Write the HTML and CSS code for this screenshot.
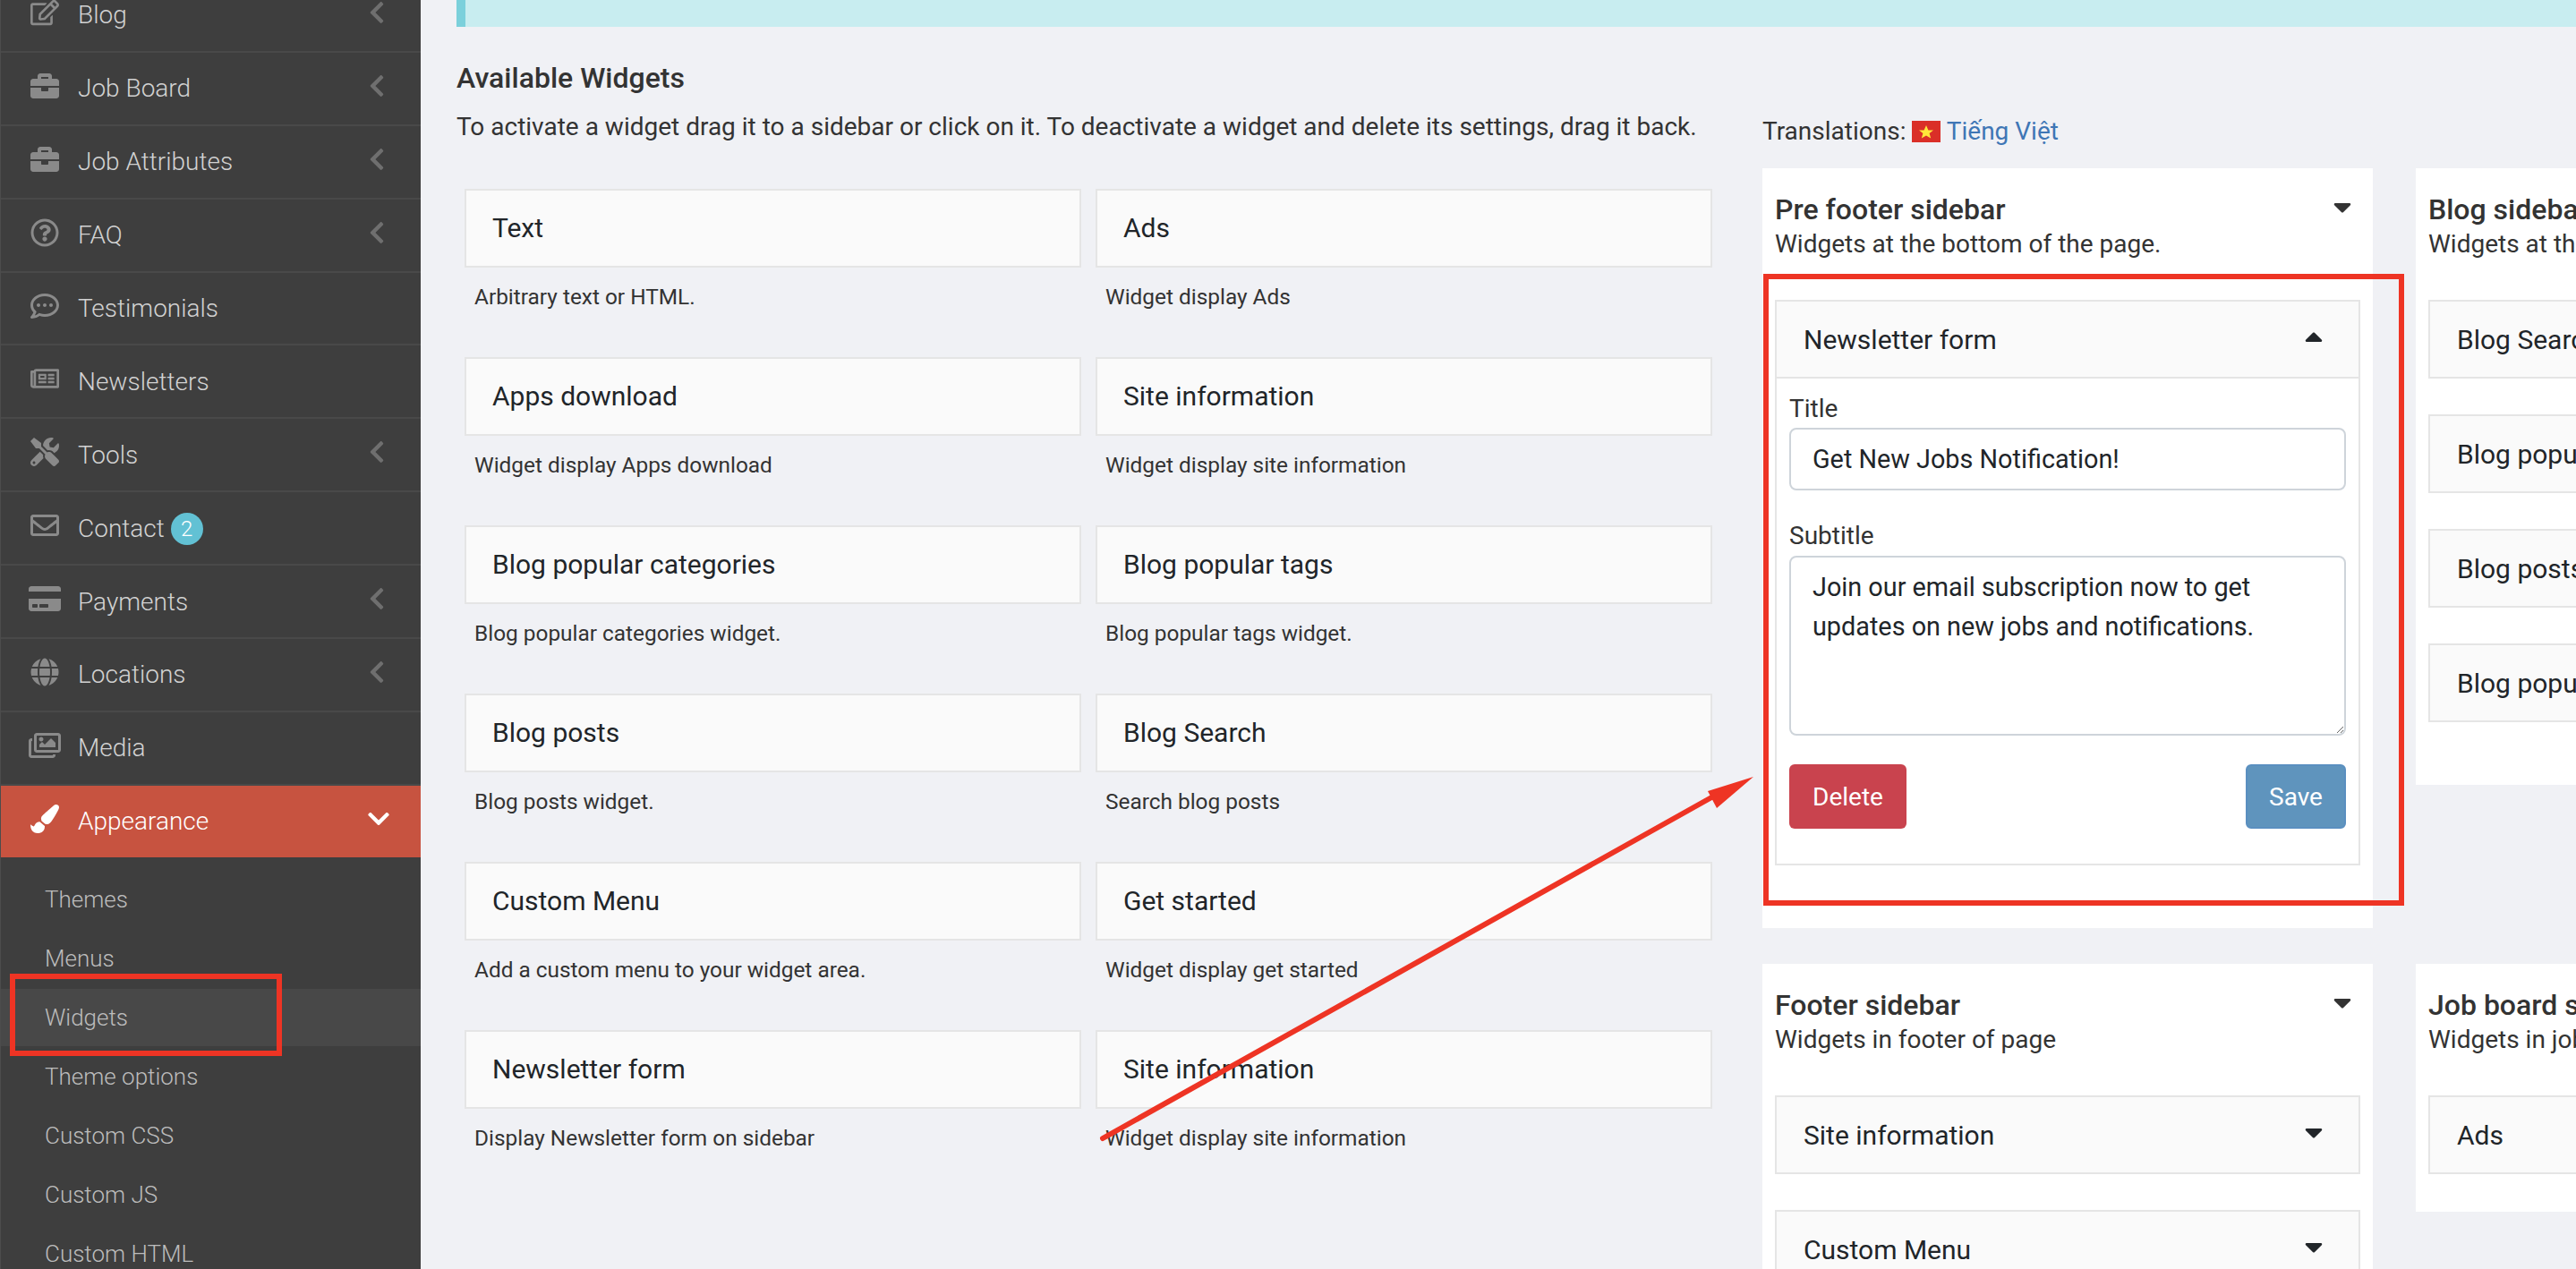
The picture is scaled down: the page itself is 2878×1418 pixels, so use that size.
FILE: index.html
```html
<!DOCTYPE html>
<html>
<head>
    <meta charset="utf-8">
    <title>Widgets</title>
    <link rel="stylesheet" href="styles.css">
</head>
<body>
    <svg class="icon-defs" width="0" height="0">
        <symbol id="chevron-left" viewBox="0 0 320 512"><path d="M34.52 239.03L228.87 44.69c9.37-9.37 24.57-9.37 33.94 0l22.67 22.67c9.36 9.36 9.37 24.52.04 33.9L131.49 256l154.02 154.75c9.34 9.38 9.32 24.54-.04 33.9l-22.67 22.67c-9.37 9.37-24.57 9.37-33.94 0L34.52 272.97c-9.37-9.37-9.37-24.57 0-33.94z"/></symbol>
        <symbol id="chevron-down" viewBox="0 0 448 512"><path d="M207.029 381.476L12.686 187.132c-9.373-9.373-9.373-24.569 0-33.941l22.667-22.667c9.357-9.357 24.522-9.375 33.901-.04L224 284.505l154.745-154.021c9.379-9.335 24.544-9.317 33.901.04l22.667 22.667c9.373 9.373 9.373 24.569 0 33.941L240.971 381.476c-9.373 9.372-24.569 9.372-33.942 0z"/></symbol>
        <symbol id="caret-down" viewBox="0 160 320 224"><path d="M31.3 192h257.3c17.8 0 26.7 21.5 14.1 34.1L174.1 354.8c-7.8 7.8-20.5 7.8-28.3 0L17.2 226.1C4.6 213.5 13.5 192 31.3 192z"/></symbol>
        <symbol id="caret-up" viewBox="0 160 320 224"><path d="M288.662 352H31.338c-17.818 0-26.741-21.543-14.142-34.142l128.662-128.662c7.81-7.81 20.474-7.81 28.284 0l128.662 128.662c12.6 12.599 3.676 34.142-14.142 34.142z"/></symbol>
        <symbol id="briefcase" viewBox="0 0 512 512"><path d="M320 336c0 8.84-7.16 16-16 16h-96c-8.84 0-16-7.16-16-16v-48H0v144c0 25.6 22.4 48 48 48h416c25.6 0 48-22.4 48-48V288H320v48zm144-208h-80V80c0-25.6-22.4-48-48-48H176c-25.6 0-48 22.4-48 48v48H48c-25.6 0-48 22.4-48 48v80h512v-80c0-25.6-22.4-48-48-48zm-144 0H192V96h128v32z"/></symbol>
    </svg>

    <div class="page">
        <nav class="sidebar">
            <ul class="menu">
                <li class="menu-item">
                    <svg class="menu-icon" viewBox="0 0 576 512"><path d="M402.3 344.9l32-32c5-5 13.7-1.5 13.7 5.7V464c0 26.5-21.5 48-48 48H48c-26.5 0-48-21.5-48-48V112c0-26.5 21.5-48 48-48h273.5c7.1 0 10.7 8.6 5.7 13.7l-32 32c-1.5 1.5-3.5 2.3-5.7 2.3H48v352h352V350.5c0-2.1.8-4.1 2.3-5.6zm156.6-201.8L296.3 405.7l-90.4 10c-26.2 2.9-48.5-19.2-45.6-45.6l10-90.4L432.9 17.1c22.9-22.9 59.9-22.9 82.7 0l43.2 43.2c22.9 22.9 22.9 60 .1 82.8zM460.1 174L402 115.9 216.2 301.8l-7.3 65.3 65.3-7.3L460.1 174zm64.8-79.7l-43.2-43.2c-4.1-4.1-10.8-4.1-14.8 0L436 82l58.1 58.1 30.9-30.9c4-4.2 4-10.8-.1-14.9z"/></svg>
                    <span class="menu-label">Blog</span>
                    <svg class="menu-arrow"><use href="#chevron-left"/></svg>
                </li>
                <li class="menu-item">
                    <svg class="menu-icon"><use href="#briefcase"/></svg>
                    <span class="menu-label">Job Board</span>
                    <svg class="menu-arrow"><use href="#chevron-left"/></svg>
                </li>
                <li class="menu-item">
                    <svg class="menu-icon"><use href="#briefcase"/></svg>
                    <span class="menu-label">Job Attributes</span>
                    <svg class="menu-arrow"><use href="#chevron-left"/></svg>
                </li>
                <li class="menu-item">
                    <svg class="menu-icon" viewBox="0 0 512 512"><path d="M256 8C119.043 8 8 119.083 8 256c0 136.997 111.043 248 248 248s248-111.003 248-248C504 119.083 392.957 8 256 8zm0 448c-110.532 0-200-89.431-200-200 0-110.495 89.472-200 200-200 110.491 0 200 89.471 200 200 0 110.53-89.431 200-200 200zm107.244-255.2c0 67.052-72.421 68.084-72.421 92.863V300c0 6.627-5.373 12-12 12h-45.647c-6.627 0-12-5.373-12-12v-8.659c0-35.745 27.1-50.034 47.579-61.516 17.561-9.845 28.324-16.541 28.324-29.579 0-17.246-21.999-28.693-39.784-28.693-23.189 0-33.894 10.977-48.942 29.969-4.057 5.12-11.46 6.071-16.666 2.124l-27.824-21.098c-5.107-3.872-6.251-11.066-2.644-16.363C184.846 131.491 214.94 112 261.794 112c49.071 0 101.45 38.304 101.45 88.8zM298 368c0 23.159-18.841 42-42 42s-42-18.841-42-42 18.841-42 42-42 42 18.841 42 42z"/></svg>
                    <span class="menu-label">FAQ</span>
                    <svg class="menu-arrow"><use href="#chevron-left"/></svg>
                </li>
                <li class="menu-item">
                    <svg class="menu-icon" viewBox="0 0 512 512"><path d="M144 208c-17.7 0-32 14.3-32 32s14.3 32 32 32 32-14.3 32-32-14.3-32-32-32zm112 0c-17.7 0-32 14.3-32 32s14.3 32 32 32 32-14.3 32-32-14.3-32-32-32zm112 0c-17.7 0-32 14.3-32 32s14.3 32 32 32 32-14.3 32-32-14.3-32-32-32zM256 32C114.6 32 0 125.1 0 240c0 47.6 19.9 91.2 52.9 126.3C38 405.7 7 439.1 6.5 439.5c-6.6 7-8.4 17.2-4.6 26S14.4 480 24 480c61.5 0 110-25.7 139.1-46.3C192 442.8 223.2 448 256 448c141.4 0 256-93.1 256-208S397.4 32 256 32zm0 368c-26.7 0-53.1-4.1-78.4-12.1l-22.7-7.2-19.5 13.8c-14.3 10.1-33.9 21.4-57.5 29 7.3-12.1 14.4-25.7 19.9-40.2l10.6-28.1-20.6-21.8C69.7 314.1 48 282.2 48 240c0-88.2 93.3-160 208-160s208 71.8 208 160-93.3 160-208 160z"/></svg>
                    <span class="menu-label">Testimonials</span>
                </li>
                <li class="menu-item">
                    <svg class="menu-icon" viewBox="0 0 576 512"><path d="M552 64H112c-20.858 0-38.643 13.377-45.248 32H24c-13.255 0-24 10.745-24 24v272c0 30.928 25.072 56 56 56h496c13.255 0 24-10.745 24-24V88c0-13.255-10.745-24-24-24zM48 392V144h16v248c0 4.411-3.589 8-8 8s-8-3.589-8-8zm480 8H111.422c.374-2.614.578-5.283.578-8V112h416v288zM172 280h136c6.627 0 12-5.373 12-12v-96c0-6.627-5.373-12-12-12H172c-6.627 0-12 5.373-12 12v96c0 6.627 5.373 12 12 12zm28-80h80v40h-80v-40zm-40 140v-24c0-6.627 5.373-12 12-12h136c6.627 0 12 5.373 12 12v24c0 6.627-5.373 12-12 12H172c-6.627 0-12-5.373-12-12zm192 0v-24c0-6.627 5.373-12 12-12h104c6.627 0 12 5.373 12 12v24c0 6.627-5.373 12-12 12H364c-6.627 0-12-5.373-12-12zm0-144v-24c0-6.627 5.373-12 12-12h104c6.627 0 12 5.373 12 12v24c0 6.627-5.373 12-12 12H364c-6.627 0-12-5.373-12-12zm0 72v-24c0-6.627 5.373-12 12-12h104c6.627 0 12 5.373 12 12v24c0 6.627-5.373 12-12 12H364c-6.627 0-12-5.373-12-12z"/></svg>
                    <span class="menu-label">Newsletters</span>
                </li>
                <li class="menu-item">
                    <svg class="menu-icon" viewBox="0 0 512 512"><path d="M501.1 395.7L384 278.6c-23.1-23.1-57.6-27.6-85.4-13.9L192 158.1V96L64 0 0 64l96 128h62.1l106.6 106.6c-13.6 27.8-9.2 62.3 13.9 85.4l117.1 117.1c14.6 14.6 38.2 14.6 52.7 0l52.7-52.7c14.5-14.6 14.5-38.2 0-52.7zM331.7 225c28.3 0 54.9 11 74.9 31l19.4 19.4c15.8-6.9 30.8-16.5 43.8-29.5 37.1-37.1 49.7-89.3 37.9-136.7-2.2-9-13.5-12.1-20.1-5.5l-74.4 74.4-67.9-11.3L334 98.9l74.4-74.4c6.6-6.6 3.4-17.9-5.7-20.2-47.4-11.7-99.6.9-136.6 37.9-28.5 28.5-41.9 66.1-41.2 103.6l82.1 82.1c8.1-1.9 16.5-2.9 24.7-2.9zm-103.9 82l-56.7-56.7L18.7 402.8c-25 25-25 65.5 0 90.5s65.5 25 90.5 0l123.6-123.6c-7.6-19.9-9.9-41.6-5-62.7zM64 472c-13.2 0-24-10.8-24-24 0-13.3 10.7-24 24-24s24 10.7 24 24c0 13.2-10.7 24-24 24z"/></svg>
                    <span class="menu-label">Tools</span>
                    <svg class="menu-arrow"><use href="#chevron-left"/></svg>
                </li>
                <li class="menu-item">
                    <svg class="menu-icon" viewBox="0 0 512 512"><path d="M464 64H48C21.49 64 0 85.49 0 112v288c0 26.51 21.49 48 48 48h416c26.51 0 48-21.49 48-48V112c0-26.51-21.49-48-48-48zm0 48v40.805c-22.422 18.259-58.168 46.651-134.587 106.49-16.841 13.247-50.201 45.072-73.413 44.701-23.208.375-56.579-31.459-73.413-44.701C106.18 199.465 70.425 171.067 48 152.805V112h416zM48 400V214.398c22.914 18.251 55.409 43.862 104.938 82.646 21.857 17.205 60.134 55.186 103.062 54.955 42.717.231 80.509-37.199 103.053-54.947 49.528-38.783 82.032-64.401 104.947-82.653V400H48z"/></svg>
                    <span class="menu-label">Contact</span>
                    <span class="badge">2</span>
                </li>
                <li class="menu-item">
                    <svg class="menu-icon menu-icon-wide" viewBox="0 0 576 512"><path d="M0 432c0 26.5 21.5 48 48 48h480c26.5 0 48-21.5 48-48V256H0v176zm192-68c0-6.6 5.4-12 12-12h136c6.6 0 12 5.4 12 12v40c0 6.6-5.4 12-12 12H204c-6.6 0-12-5.4-12-12v-40zm-128 0c0-6.6 5.4-12 12-12h72c6.6 0 12 5.4 12 12v40c0 6.6-5.4 12-12 12H76c-6.6 0-12-5.4-12-12v-40zM576 80v48H0V80c0-26.5 21.5-48 48-48h480c26.5 0 48 21.5 48 48z"/></svg>
                    <span class="menu-label">Payments</span>
                    <svg class="menu-arrow"><use href="#chevron-left"/></svg>
                </li>
                <li class="menu-item">
                    <svg class="menu-icon" viewBox="0 0 496 512"><path d="M336.5 160C322 70.7 287.8 8 248 8s-74 62.7-88.5 152h177zM152 256c0 22.2 1.2 43.5 3.3 64h185.3c2.1-20.5 3.3-41.8 3.3-64s-1.2-43.5-3.3-64H155.3c-2.1 20.5-3.3 41.8-3.3 64zm324.7-96c-28.6-67.9-86.5-120.4-158-141.6 24.4 33.8 41.2 84.7 50 141.6h108zM177.2 18.4C105.8 39.6 47.8 92.1 19.3 160h108c8.7-56.9 25.5-107.8 49.9-141.6zM487.4 192H372.7c2.1 21 3.3 42.5 3.3 64s-1.2 43-3.3 64h114.6c5.5-20.5 8.6-41.8 8.6-64s-3.1-43.5-8.5-64zM120 256c0-21.5 1.2-43 3.3-64H8.6C3.2 212.5 0 233.8 0 256s3.2 43.5 8.6 64h114.6c-2-21-3.2-42.5-3.2-64zm39.5 96c14.5 89.3 48.7 152 88.5 152s74-62.7 88.5-152h-177zm159.3 141.6c71.4-21.2 129.4-73.7 158-141.6h-108c-8.8 56.9-25.6 107.8-50 141.6zM19.3 352c28.6 67.9 86.5 120.4 158 141.6-24.4-33.8-41.2-84.7-50-141.6h-108z"/></svg>
                    <span class="menu-label">Locations</span>
                    <svg class="menu-arrow"><use href="#chevron-left"/></svg>
                </li>
                <li class="menu-item">
                    <svg class="menu-icon menu-icon-wide" viewBox="0 0 576 512"><path d="M480 416v16c0 26.51-21.49 48-48 48H48c-26.51 0-48-21.49-48-48V176c0-26.51 21.49-48 48-48h16v48H54a6 6 0 0 0-6 6v244a6 6 0 0 0 6 6h372a6 6 0 0 0 6-6v-10h48zm42-336H150a6 6 0 0 0-6 6v244a6 6 0 0 0 6 6h372a6 6 0 0 0 6-6V86a6 6 0 0 0-6-6zm6-48c26.51 0 48 21.49 48 48v256c0 26.51-21.49 48-48 48H144c-26.51 0-48-21.49-48-48V80c0-26.51 21.49-48 48-48h384zM264 144c0 22.091-17.909 40-40 40s-40-17.909-40-40 17.909-40 40-40 40 17.909 40 40zm-72 96l39.515-39.515c4.686-4.686 12.284-4.686 16.971 0L288 240l103.515-103.515c4.686-4.686 12.284-4.686 16.971 0L480 208v80H192v-48z"/></svg>
                    <span class="menu-label">Media</span>
                </li>
                <li class="menu-item menu-item-active">
                    <svg class="menu-icon" viewBox="0 0 512 512"><path d="M167.02 309.34c-40.12 2.58-76.53 17.86-97.19 72.3-2.35 6.21-8 9.98-14.59 9.98-11.11 0-45.46-27.67-55.25-34.35C0 439.62 37.93 512 128 512c75.86 0 128-43.77 128-120.19 0-3.11-.65-6.08-.97-9.13l-88.01-73.34zM457.89 0c-15.16 0-29.37 6.71-40.21 16.45C213.27 199.05 192 203.34 192 257.09c0 13.7 3.25 26.76 8.73 38.7l63.82 53.18c7.21 1.8 14.64 3.03 22.39 3.03 62.11 0 98.11-45.47 211.16-256.46 7.38-14.35 13.9-29.85 13.9-45.99C512 20.64 486 0 457.89 0z"/></svg>
                    <span class="menu-label">Appearance</span>
                    <svg class="menu-arrow menu-arrow-open"><use href="#chevron-down"/></svg>
                </li>
            </ul>
            <ul class="submenu">
                <li>Themes</li>
                <li>Menus</li>
                <li class="submenu-active">Widgets</li>
                <li>Theme options</li>
                <li>Custom CSS</li>
                <li>Custom JS</li>
                <li>Custom HTML</li>
            </ul>
        </nav>

        <main class="content">
            <div class="notice"></div>
            <div class="columns">
                <section class="available">
                    <h2 class="available-title">Available Widgets</h2>
                    <p class="available-help">To activate a widget drag it to a sidebar or click on it. To deactivate a widget and delete its settings, drag it back.</p>
                    <div class="widget-grid">
                        <div class="widget-card"><div class="widget-name">Text</div><p class="widget-desc">Arbitrary text or HTML.</p></div>
                        <div class="widget-card"><div class="widget-name">Ads</div><p class="widget-desc">Widget display Ads</p></div>
                        <div class="widget-card"><div class="widget-name">Apps download</div><p class="widget-desc">Widget display Apps download</p></div>
                        <div class="widget-card"><div class="widget-name">Site information</div><p class="widget-desc">Widget display site information</p></div>
                        <div class="widget-card"><div class="widget-name">Blog popular categories</div><p class="widget-desc">Blog popular categories widget.</p></div>
                        <div class="widget-card"><div class="widget-name">Blog popular tags</div><p class="widget-desc">Blog popular tags widget.</p></div>
                        <div class="widget-card"><div class="widget-name">Blog posts</div><p class="widget-desc">Blog posts widget.</p></div>
                        <div class="widget-card"><div class="widget-name">Blog Search</div><p class="widget-desc">Search blog posts</p></div>
                        <div class="widget-card"><div class="widget-name">Custom Menu</div><p class="widget-desc">Add a custom menu to your widget area.</p></div>
                        <div class="widget-card"><div class="widget-name">Get started</div><p class="widget-desc">Widget display get started</p></div>
                        <div class="widget-card"><div class="widget-name">Newsletter form</div><p class="widget-desc">Display Newsletter form on sidebar</p></div>
                        <div class="widget-card"><div class="widget-name">Site information</div><p class="widget-desc">Widget display site information</p></div>
                    </div>
                </section>

                <section class="areas">
                    <p class="translations">Translations: <svg class="flag" viewBox="0 0 32 24"><rect width="32" height="24" fill="#da2f28"/><polygon points="16,5 18.4,10.4 24,10.4 19.6,14 21.2,19.6 16,16.4 10.8,19.6 12.4,14 8,10.4 13.6,10.4" fill="#ffe83a"/></svg> <a class="translation-link">Tiếng Việt</a></p>
                    <div class="area-grid">
                        <div class="area">
                            <div class="area-head">
                                <div class="area-title">Pre footer sidebar<svg class="caret area-caret"><use href="#caret-down"/></svg></div>
                                <div class="area-desc">Widgets at the bottom of the page.</div>
                            </div>
                            <div class="area-widget">
                                <div class="area-widget-head">Newsletter form<svg class="caret"><use href="#caret-up"/></svg></div>
                                <form class="widget-form">
                                    <label class="field-label" for="nl-title">Title</label>
                                    <input class="field field-input" id="nl-title" type="text" value="Get New Jobs Notification!">
                                    <label class="field-label field-label-second" for="nl-subtitle">Subtitle</label>
                                    <textarea class="field field-area" id="nl-subtitle">Join our email subscription now to get updates on new jobs and notifications.</textarea>
                                    <div class="form-actions">
                                        <button class="btn btn-delete" type="button">Delete</button>
                                        <button class="btn btn-save" type="button">Save</button>
                                    </div>
                                </form>
                            </div>
                        </div>
                        <div class="area">
                            <div class="area-head">
                                <div class="area-title">Blog sidebar<svg class="caret area-caret"><use href="#caret-down"/></svg></div>
                                <div class="area-desc">Widgets at the bottom of blog pages.</div>
                            </div>
                            <div class="area-widget"><div class="area-widget-head">Blog Search<svg class="caret"><use href="#caret-down"/></svg></div></div>
                            <div class="area-widget"><div class="area-widget-head">Blog popular categories<svg class="caret"><use href="#caret-down"/></svg></div></div>
                            <div class="area-widget"><div class="area-widget-head">Blog posts<svg class="caret"><use href="#caret-down"/></svg></div></div>
                            <div class="area-widget"><div class="area-widget-head">Blog popular tags<svg class="caret"><use href="#caret-down"/></svg></div></div>
                        </div>
                        <div class="area">
                            <div class="area-head">
                                <div class="area-title">Footer sidebar<svg class="caret area-caret"><use href="#caret-down"/></svg></div>
                                <div class="area-desc">Widgets in footer of page</div>
                            </div>
                            <div class="area-widget"><div class="area-widget-head">Site information<svg class="caret"><use href="#caret-down"/></svg></div></div>
                            <div class="area-widget"><div class="area-widget-head">Custom Menu<svg class="caret"><use href="#caret-down"/></svg></div></div>
                        </div>
                        <div class="area area-tight">
                            <div class="area-head">
                                <div class="area-title">Job board sidebar<svg class="caret area-caret"><use href="#caret-down"/></svg></div>
                                <div class="area-desc">Widgets in job board pages</div>
                            </div>
                            <div class="area-widget"><div class="area-widget-head">Ads<svg class="caret"><use href="#caret-down"/></svg></div></div>
                        </div>
                    </div>
                </section>
            </div>
        </main>
    </div>

    <!-- red markup drawn over the screenshot -->
    <svg class="markup" viewBox="0 0 2878 1418">
        <rect x="14" y="1091" width="298" height="86" fill="none" stroke="#ee3424" stroke-width="6"/>
        <rect x="1973" y="309" width="710" height="700" fill="none" stroke="#ee3424" stroke-width="6"/>
        <path d="M1232 1272L1914 890" stroke="#ee3424" stroke-width="6" stroke-linecap="round"/>
        <polygon points="1959,868 1908,884 1918,903" fill="#ee3424"/>
    </svg>
</body>
</html>
```

FILE: styles.css
```css
* {
    box-sizing: border-box;
}
html, body {
    margin: 0;
    height: 1418px;
    overflow: hidden;
}
body {
    position: relative;
    background-color: #f0f1f5;
    color: #212529;
    font-family: Roboto, "Liberation Sans", sans-serif;
    font-size: 28px;
}
ul {
    list-style: none;
    margin: 0;
    padding: 0;
}
p {
    margin: 0;
}
.icon-defs {
    position: absolute;
}
.page {
    display: flex;
    height: 1418px;
}

/* sidebar */
.sidebar {
    flex: 0 0 470px;
    height: 1418px;
    overflow: hidden;
    background-color: #3e3e3e;
    border-left: 1px solid #4c4c4c;
    font-weight: 300;
}
.menu {
    margin-top: -23px;
}
.menu-item {
    display: flex;
    align-items: center;
    height: 81.9px;
    padding-left: 33px;
    border-bottom: 2px solid #494949;
    color: #d2d2d2;
}
.menu-icon {
    flex: 0 0 32px;
    width: 32px;
    height: 32px;
    margin-top: -6px;
    fill: #8a8a8a;
}
.menu-icon-wide {
    flex: 0 0 36px;
    width: 36px;
    margin-left: -2px;
    margin-right: -2px;
}
.menu-label {
    margin-left: 21px;
}
.menu-arrow {
    width: 18px;
    height: 28px;
    margin-left: auto;
    margin-right: 40px;
    margin-top: -6px;
    fill: #6f6f6f;
}
.badge {
    display: flex;
    align-items: center;
    justify-content: center;
    width: 36px;
    height: 36px;
    margin-left: 7px;
    margin-top: 2px;
    border-radius: 50%;
    background-color: #62c1d4;
    color: #fff;
    font-size: 24px;
}
.menu-item-active {
    height: 80px;
    border-bottom: 0;
    background-color: #c75340;
    color: #fff;
}
.menu-item-active .menu-icon {
    fill: #fff;
}
.menu-arrow-open {
    width: 24px;
    margin-right: 35px;
    fill: #fff;
}
.submenu {
    padding-top: 15px;
}
.submenu li {
    height: 66px;
    padding: 16px 0 0 49px;
    color: #bcbcbc;
    font-size: 26px;
    line-height: 32px;
}
.submenu .submenu-active {
    height: 64px;
    margin-bottom: 2px;
    background-color: #484848;
}

/* main */
.content {
    flex: 1;
    min-width: 0;
    padding-left: 40px;
}
.notice {
    height: 30px;
    background-color: #c8edf0;
    border-left: 10px solid #7bd0db;
}
.columns {
    display: flex;
}
.available {
    flex: 0 0 1459px;
}
.available-title {
    margin: 38px 0 0;
    color: #333;
    font-size: 32px;
    font-weight: 500;
    line-height: 38px;
}
.available-help {
    margin-top: 19px;
    color: #333;
    line-height: 34px;
}
.widget-grid {
    display: grid;
    grid-template-columns: 689px 689px;
    column-gap: 16px;
    margin: 52px 0 0 9px;
}
.widget-card {
    height: 188px;
}
.widget-name {
    height: 88px;
    padding-left: 29px;
    background-color: #fafafa;
    border: 2px solid #e5e5e5;
    color: #212529;
    line-height: 84px;
    font-size: 30px;
}
.widget-desc {
    margin-top: 18px;
    padding-left: 11px;
    color: #333;
    font-size: 24.4px;
    line-height: 30px;
}

/* widget areas */
.areas {
    flex: none;
    width: 1500px;
}
.translations {
    margin-top: 100px;
    height: 34px;
    line-height: 34px;
    color: #333;
}
.flag {
    width: 32px;
    height: 24px;
    vertical-align: -3px;
}
.translation-link {
    color: #3f76b5;
}
.area-grid {
    display: grid;
    grid-template-columns: 682px 682px;
    column-gap: 48px;
    row-gap: 40px;
    margin-top: 24px;
    align-items: start;
}
.area {
    background-color: #fff;
    padding: 0 14px 30px;
}
.area-tight {
    padding-bottom: 2px;
}
.area-head {
    height: 147px;
    padding-top: 27px;
}
.area-title {
    display: flex;
    align-items: center;
    justify-content: space-between;
    padding-right: 10px;
    color: #333;
    font-size: 32px;
    font-weight: 500;
    line-height: 38px;
}
.area-desc {
    margin-top: 3px;
    color: #333;
    line-height: 34px;
}
.area-widget {
    margin-bottom: 40px;
    border: 2px solid #e5e5e5;
}
.area-widget-head {
    display: flex;
    align-items: center;
    justify-content: space-between;
    height: 84px;
    padding: 0 40px 0 30px;
    background-color: #fafafa;
    color: #212529;
    font-size: 30px;
}
.caret {
    width: 20px;
    height: 14px;
    margin-top: -4px;
    fill: #212529;
}
.area-caret {
    fill: #333;
}
.widget-form {
    height: 544px;
    padding: 0 14px;
    border-top: 2px solid #e5e5e5;
}
.field-label {
    display: block;
    padding-top: 18px;
    color: #333;
    line-height: 32px;
}
.field-label-second {
    padding-top: 35px;
}
.field {
    display: block;
    width: 622px;
    margin-top: 5px;
    padding: 0 24px;
    background-color: #fff;
    border: 2px solid #ced4da;
    border-radius: 8px;
    color: #212529;
    font-family: Roboto, "Liberation Sans", sans-serif;
    font-size: 28.8px;
}
.field-input {
    height: 70px;
}
.field-area {
    height: 201px;
    margin-top: 6px;
    padding-top: 11px;
    line-height: 44px;
    resize: vertical;
}
.form-actions {
    display: flex;
    justify-content: space-between;
    margin-top: 32px;
}
.btn {
    height: 72px;
    border: 0;
    border-radius: 6px;
    color: #fff;
    font-family: Roboto, "Liberation Sans", sans-serif;
    font-size: 28px;
}
.btn-delete {
    width: 131px;
    background-color: #c9434e;
}
.btn-save {
    width: 112px;
    background-color: #5f94bd;
    border: 2px solid #5a8fc0;
}

/* annotation layer */
.markup {
    position: absolute;
    left: 0;
    top: 0;
    width: 2878px;
    height: 1418px;
    pointer-events: none;
}
```
